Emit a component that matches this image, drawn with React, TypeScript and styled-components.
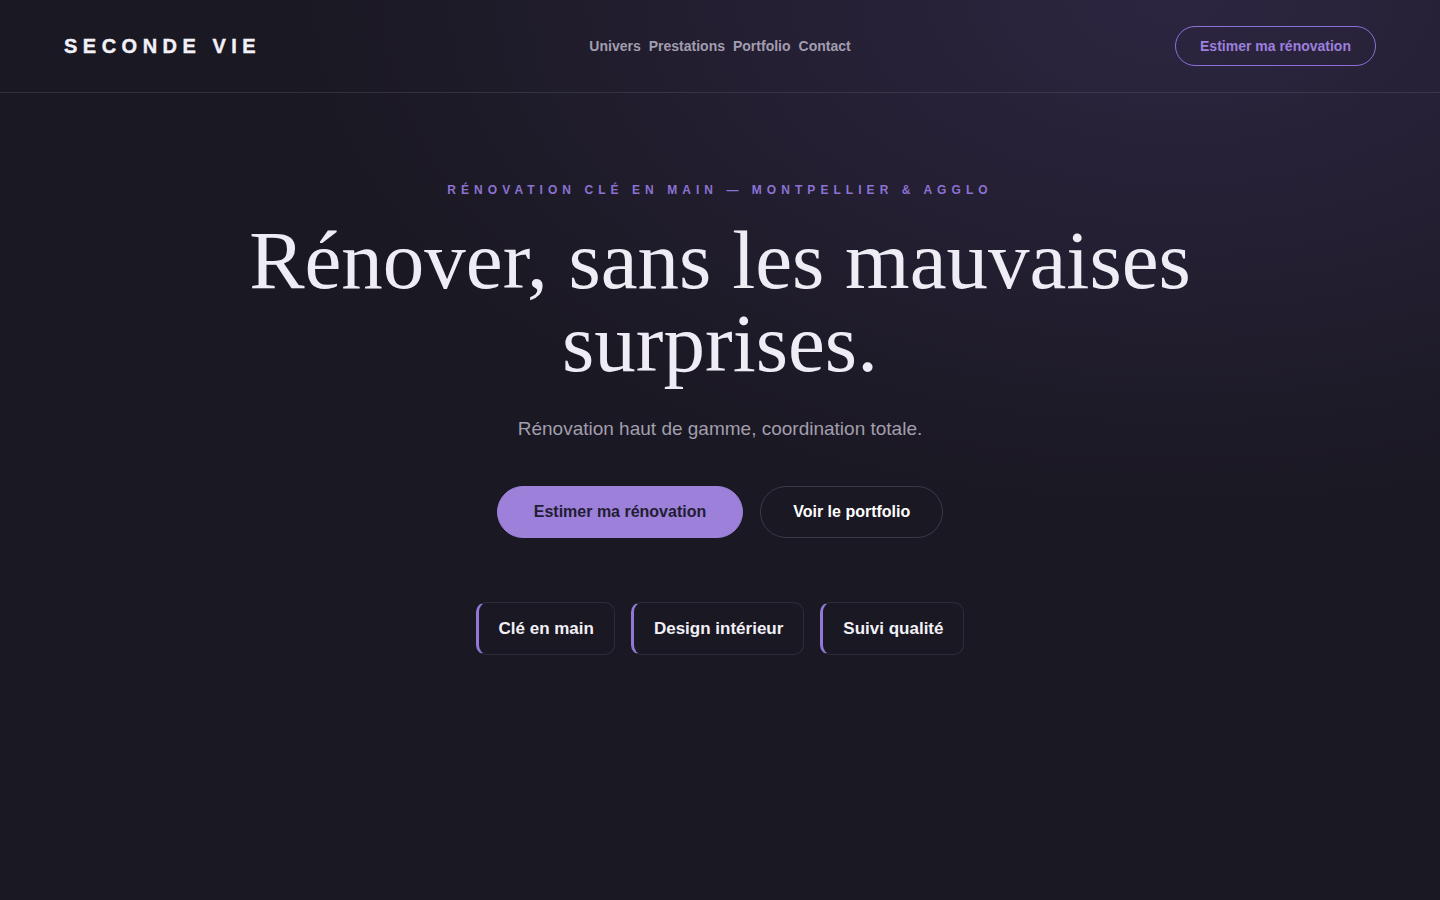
import React from "react";
import styled, { createGlobalStyle } from "styled-components";

const Global = createGlobalStyle`
  html, body { margin: 0; padding: 0; }
  body {
    background: #1a1822;
    font-family: "Liberation Sans", Arial, sans-serif;
    color: #f0eef5;
  }
  * { box-sizing: border-box; }
`;

const Page = styled.div`
  min-height: 900px;
  background:
    radial-gradient(ellipse 900px 520px at 1180px 0px, rgba(60, 48, 90, 0.55), rgba(40, 34, 60, 0) 100%),
    #1a1822;
`;

const Header = styled.header`
  height: 93px;
  padding: 0 64px;
  display: grid;
  grid-template-columns: 1fr auto 1fr;
  align-items: center;
  border-bottom: 1px solid rgba(255, 255, 255, 0.1);
`;

const Logo = styled.div`
  font-weight: 700;
  font-size: 20px;
  letter-spacing: 5.5px;
  color: #f3f1f8;
  -webkit-text-stroke: 0.4px #f3f1f8;
`;

const Nav = styled.nav`
  display: flex;
  gap: 8px;
`;

const NavLink = styled.a`
  font-size: 14px;
  font-weight: 700;
  color: #a19daf;
  text-decoration: none;
`;

const Right = styled.div`
  display: flex;
  justify-content: flex-end;
`;

const HeaderCta = styled.a`
  width: 201px;
  height: 40px;
  border: 1px solid #8d70d6;
  border-radius: 20px;
  display: flex;
  align-items: center;
  justify-content: center;
  font-size: 14px;
  font-weight: 700;
  color: #9c80dc;
`;

const Hero = styled.section`
  display: flex;
  flex-direction: column;
  align-items: center;
  text-align: center;
  padding-top: 90px;
`;

const Eyebrow = styled.div`
  font-size: 12px;
  font-weight: 700;
  letter-spacing: 5.05px;
  color: #8c72d2;
`;

const Title = styled.h1`
  margin: 22px 0 0;
  font-family: "Liberation Serif", "Times New Roman", serif;
  font-weight: 400;
  font-size: 83px;
  line-height: 83px;
  color: #eeecf4;
  max-width: 1200px;
`;

const Subtitle = styled.p`
  margin: 33px 0 0;
  font-size: 19px;
  color: #a29eae;
`;

const Actions = styled.div`
  display: flex;
  gap: 17px;
  margin-top: 46px;
`;

const Button = styled.a<{ $primary?: boolean }>`
  height: 52px;
  padding: 0 ${(p) => (p.$primary ? 36 : 32)}px;
  border-radius: 26px;
  display: flex;
  align-items: center;
  font-size: 16px;
  font-weight: 700;
  background: ${(p) => (p.$primary ? "#9c80da" : "transparent")};
  color: ${(p) => (p.$primary ? "#221d33" : "#ffffff")};
  border: 1px solid ${(p) => (p.$primary ? "#9c80da" : "#3c3947")};
`;

const Pills = styled.div`
  display: flex;
  gap: 16px;
  margin-top: 64px;
`;

const Pill = styled.div`
  height: 53px;
  padding: 0 20px;
  display: flex;
  align-items: center;
  border: 1px solid #2f2c3a;
  border-left: 3px solid #9178d4;
  border-radius: 10px;
  background: #1a1822;
  font-size: 17px;
  font-weight: 700;
  color: #f2f0f7;
`;

export default function App() {
  return (
    <>
      <Global />
      <Page>
        <Header>
          <Logo>SECONDE VIE</Logo>
          <Nav>
            <NavLink>Univers</NavLink>
            <NavLink>Prestations</NavLink>
            <NavLink>Portfolio</NavLink>
            <NavLink>Contact</NavLink>
          </Nav>
          <Right>
            <HeaderCta>Estimer ma rénovation</HeaderCta>
          </Right>
        </Header>
        <Hero>
          <Eyebrow>RÉNOVATION CLÉ EN MAIN — MONTPELLIER &amp; AGGLO</Eyebrow>
          <Title>
            Rénover, sans les mauvaises
            <br />
            surprises.
          </Title>
          <Subtitle>Rénovation haut de gamme, coordination totale.</Subtitle>
          <Actions>
            <Button $primary>Estimer ma rénovation</Button>
            <Button>Voir le portfolio</Button>
          </Actions>
          <Pills>
            <Pill>Clé en main</Pill>
            <Pill>Design intérieur</Pill>
            <Pill>Suivi qualité</Pill>
          </Pills>
        </Hero>
      </Page>
    </>
  );
}
